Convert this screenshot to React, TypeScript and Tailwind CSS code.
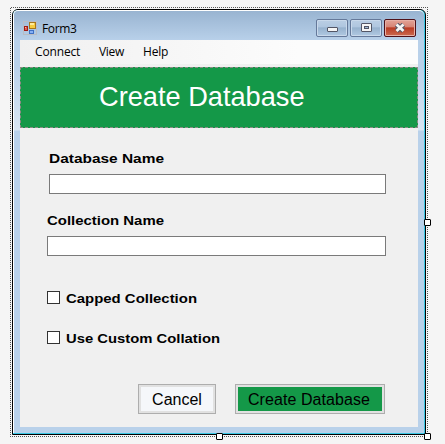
import React from "react";

const labelFont = "font-['Liberation_Sans',Arial,sans-serif] font-bold text-[13.33px] leading-[16px] text-black whitespace-nowrap";
const uiFont = "font-['Open_Sans','Noto_Sans',sans-serif] text-[12px] leading-[16px] text-black whitespace-nowrap";

function FormIcon() {
  return (
    <svg width="14" height="14" viewBox="0 0 14 14" shapeRendering="crispEdges">
      <rect x="0.5" y="0.5" width="13" height="13" fill="none" stroke="#b9bcc4" />
      <rect x="6" y="1" width="7" height="7" fill="#a8761a" />
      <rect x="7" y="2" width="5" height="5" fill="#f6cc3f" />
      <rect x="7" y="2" width="4" height="2" fill="#ffeb9a" />
      <rect x="1" y="5" width="4" height="5" fill="#a01a14" />
      <rect x="2" y="6" width="2" height="3" fill="#e0604c" />
      <rect x="2" y="6" width="1" height="1" fill="#f7b8a8" />
      <rect x="6" y="9" width="5" height="4" fill="#3f70c4" />
      <rect x="7" y="10" width="3" height="2" fill="#86b0f5" />
    </svg>
  );
}

function CaptionButton({ kind }: { kind: "min" | "max" | "close" }) {
  const close = kind === "close";
  return (
    <div
      className={
        close
          ? "flex h-[18px] w-[32px] items-center justify-center rounded-[2px] border border-[#4e1018] bg-[linear-gradient(#e3a397_0%,#d58374_45%,#b93a22_48%,#cc6a50_100%)] shadow-[inset_0_0_0_1px_#e7b0a6]"
          : "flex h-[18px] w-[32px] items-center justify-center rounded-[2px] border border-[#65799a] bg-[linear-gradient(#bacee4_0%,#afc6df_45%,#96b1cd_48%,#b0c9e2_100%)] shadow-[inset_0_0_0_1px_#c9d9eb]"
      }
    >
      {kind === "min" && (
        <svg width="12" height="10" viewBox="0 0 12 10">
          <rect x="1.5" y="4.5" width="10" height="4" rx="0.5" fill="#f5f5f5" stroke="#535666" />
        </svg>
      )}
      {kind === "max" && (
        <svg width="12" height="10" viewBox="0 0 12 10">
          <rect x="1.5" y="0.5" width="10" height="8" rx="0.5" fill="#f5f5f5" stroke="#535666" />
          <rect x="4.5" y="3.5" width="4" height="2" fill="#9fb8d3" stroke="#535666" />
        </svg>
      )}
      {close && (
        <svg width="12" height="10" viewBox="0 0 12 10">
          <path d="M2.5 1.5 9.5 8M9.5 1.5 2.5 8" stroke="#535666" strokeWidth="4.8" />
          <path d="M2.5 1.5 9.5 8M9.5 1.5 2.5 8" stroke="#f5f5f5" strokeWidth="2.8" />
        </svg>
      )}
    </div>
  );
}

function Label({ text, width }: { text: string; width: number }) {
  return (
    <svg className="block overflow-visible" width={width} height="16">
      <text x="0" y="13" textLength={width} lengthAdjust="spacingAndGlyphs" className={labelFont}>{text}</text>
    </svg>
  );
}

function Check({ label, width }: { label: string; width: number }) {
  return (
    <div className="flex h-[16px] items-start gap-[6px]">
      <div className="mt-px h-[13px] w-[13px] border border-[#333] bg-white" />
      <Label text={label} width={width} />
    </div>
  );
}

export default function App() {
  return (
    <div className="h-[444px] w-[445px] overflow-hidden bg-[#f5f5f5] pt-[7px] pl-[10px]">
      <div className="relative h-[430px] w-[418px] bg-[repeating-conic-gradient(#555_0_25%,#f5f5f5_0_50%)] bg-[length:2px_2px] p-px">
        <div className="h-full w-full bg-[#f5f5f5] p-px">
          <div className="h-[426px] w-[414px] rounded-t-[6px] border border-black bg-[#38c6e4] pr-px pb-px">
            <div className="flex h-full w-full flex-col rounded-t-[5px] border-t border-l border-white bg-[linear-gradient(#99b4d1_0px,#b9d1ea_30px,#b9d1ea_55px,#d9e6f3_119px,#b9d1ea_120px)] pr-[6px] pb-[6px] pl-[6px]">
              <div className="flex h-[29px] shrink-0 items-start pt-[8px] pl-[3px]">
                <div className="pt-[2px]"><FormIcon /></div>
                <span className={`${uiFont} mt-[2px] ml-[5px] tracking-[-0.35px]`}>Form3</span>
                <div className="ml-auto flex gap-[2px] pr-[2px]">
                  <CaptionButton kind="min" />
                  <CaptionButton kind="max" />
                  <CaptionButton kind="close" />
                </div>
              </div>
              <div className="h-[387px] w-[398px] bg-[#f0f0f0]">
                <div className="h-[27px] border-b-[3px] border-[#f0f0f0] bg-[linear-gradient(90deg,#f0f0f0,#fcfcfc_70%)]">
                  <div className="flex pt-[4px] pl-[15px]">
                    <span className={`${uiFont} w-[64px] tracking-[-0.15px]`}>Connect</span>
                    <span className={`${uiFont} w-[44px] tracking-[-0.3px]`}>View</span>
                    <span className={`${uiFont} tracking-[-0.2px]`}>Help</span>
                  </div>
                </div>
                <div className="h-[61px] border border-dashed border-[#8d8a86] bg-[#149848] pt-[13px] pl-[78px]">
                  <span className="block font-['Liberation_Sans',Arial,sans-serif] text-[27.2px] leading-[32px] whitespace-nowrap text-white">Create Database</span>
                </div>
                <div className="pt-[22px] pl-[27px]">
                  <div className="pl-[2px]"><Label text="Database Name" width={115} /></div>
                  <div className="mt-[8px] ml-[2px] h-[20px] w-[337px] border border-[#7a7a7a] bg-white" />
                  <div className="mt-[18px]"><Label text="Collection Name" width={117} /></div>
                  <div className="mt-[8px] h-[20px] w-[339px] border border-[#7a7a7a] bg-white" />
                  <div className="mt-[34px]"><Check label="Capped Collection" width={131} /></div>
                  <div className="mt-[24px]"><Check label="Use Custom Collation" width={154} /></div>
                </div>
                <div className="mt-[38px] flex gap-[19px] pl-[118px] font-['Liberation_Sans',Arial,sans-serif] text-[16px] leading-[24px] text-black">
                  <button className="h-[30px] w-[78px] border border-[#adadad] bg-[#e1e1e1] p-[2px]">
                    <span className="flex h-full items-center justify-center bg-[#f5f7fa] pt-[2px]">Cancel</span>
                  </button>
                  <button className="h-[30px] w-[150px] border border-[#adadad] bg-[#e1e1e1] p-[2px]">
                    <span className="flex h-full items-center bg-[#149848] pt-[2px] pl-[10px] tracking-[0.07px] whitespace-nowrap">Create Database</span>
                  </button>
                </div>
              </div>
            </div>
          </div>
        </div>
        <div className="absolute top-[212px] left-[414px] h-[7px] w-[7px] rounded-[1px] border border-black bg-white" />
        <div className="absolute top-[426px] left-[206px] h-[7px] w-[7px] rounded-[1px] border border-black bg-white" />
        <div className="absolute top-[426px] left-[414px] h-[7px] w-[7px] rounded-[1px] border border-black bg-white" />
      </div>
    </div>
  );
}
